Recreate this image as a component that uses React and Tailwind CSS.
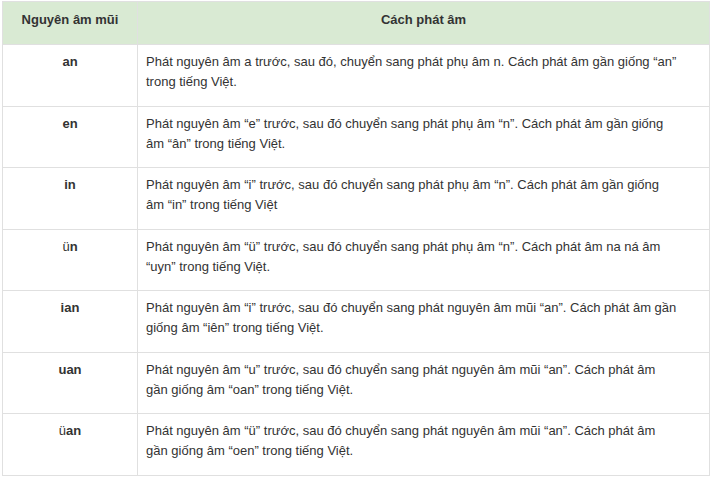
const rows = [
  {
    key: [null, "an"],
    text: "Phát nguyên âm a trước, sau đó, chuyển sang phát phụ âm n. Cách phát âm gần giống “an” trong tiếng Việt.",
  },
  {
    key: [null, "en"],
    text: "Phát nguyên âm “e” trước, sau đó chuyển sang phát phụ âm “n”. Cách phát âm gần giống âm “ân” trong tiếng Việt.",
  },
  {
    key: [null, "in"],
    text: "Phát nguyên âm “i” trước, sau đó chuyển sang phát phụ âm “n”. Cách phát âm gần giống âm “in” trong tiếng Việt",
  },
  {
    key: ["ü", "n"],
    text: "Phát nguyên âm “ü” trước, sau đó chuyển sang phát phụ âm “n”. Cách phát âm na ná âm “uyn” trong tiếng Việt.",
  },
  {
    key: [null, "ian"],
    text: "Phát nguyên âm “i” trước, sau đó chuyển sang phát nguyên âm mũi “an”. Cách phát âm gần giống âm “iên” trong tiếng Việt.",
  },
  {
    key: [null, "uan"],
    text: "Phát nguyên âm “u” trước, sau đó chuyển sang phát nguyên âm mũi “an”. Cách phát âm gần giống âm “oan” trong tiếng Việt.",
  },
  {
    key: ["ü", "an"],
    text: "Phát nguyên âm “ü” trước, sau đó chuyển sang phát nguyên âm mũi “an”. Cách phát âm gần giống âm “oen” trong tiếng Việt.",
  },
];

export default function App() {
  return (
    <div className="w-[723px] h-[477px] bg-white pt-px pl-[2px] overflow-hidden" style={{ fontFamily: '"Liberation Sans", Arial, sans-serif' }}>
      <table className="w-[708px] border-collapse text-[13px] leading-[20px] text-[#333]">
        <thead>
          <tr className="h-[43px] bg-[#d9ead3]">
            <th className="w-[135px] border border-[#e0e0e0] font-bold text-center align-middle pb-[6px]">Nguyên âm mũi</th>
            <th className="border border-[#e0e0e0] font-bold text-center align-middle pb-[6px]">Cách phát âm</th>
          </tr>
        </thead>
        <tbody>
          {rows.map((r, i) => (
            <tr key={i} className="h-[61.5px]">
              <td className="border border-[#e0e0e0] text-center align-top pt-[7px] font-bold">
                {r.key[0] && <span className="font-normal">{r.key[0]}</span>}
                {r.key[1]}
              </td>
              <td className="border border-[#e0e0e0] align-top pt-[7px] pl-2 pr-[28.5px]">{r.text}</td>
            </tr>
          ))}
        </tbody>
      </table>
    </div>
  );
}
